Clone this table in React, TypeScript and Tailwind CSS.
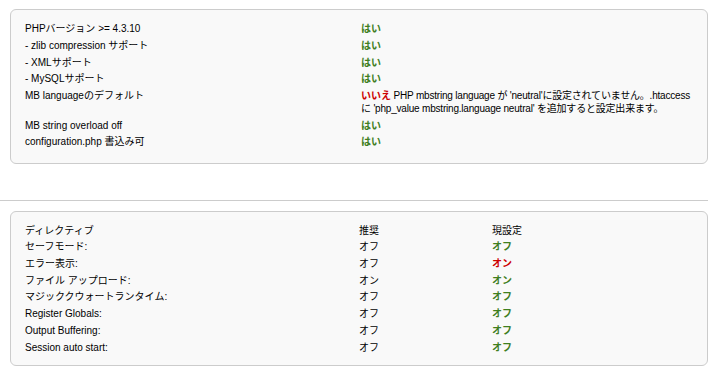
import React from 'react';

const font = { fontFamily: '"Liberation Sans", "Noto Sans CJK JP", sans-serif' };

const checks: { label: string; ok: boolean; note?: React.ReactNode }[] = [
  { label: 'PHPバージョン >= 4.3.10', ok: true },
  { label: '- zlib compression サポート', ok: true },
  { label: '- XMLサポート', ok: true },
  { label: '- MySQLサポート', ok: true },
  {
    label: 'MB languageのデフォルト',
    ok: false,
    note: <>
        PHP mbstring language が 'neutral'に設定されていません。.htaccess
        <br />
        に 'php_value mbstring.language neutral' を追加すると設定出来ます。
      </>
  },
  { label: 'MB string overload off', ok: true },
  { label: 'configuration.php 書込み可', ok: true }
];

const settings: { label: string; rec: string; cur: string; good: boolean }[] = [
  { label: 'セーフモード:', rec: 'オフ', cur: 'オフ', good: true },
  { label: 'エラー表示:', rec: 'オフ', cur: 'オン', good: false },
  { label: 'ファイル アップロード:', rec: 'オン', cur: 'オン', good: true },
  { label: 'マジッククウォートランタイム:', rec: 'オフ', cur: 'オフ', good: true },
  { label: 'Register Globals:', rec: 'オフ', cur: 'オフ', good: true },
  { label: 'Output Buffering:', rec: 'オフ', cur: 'オフ', good: true },
  { label: 'Session auto start:', rec: 'オフ', cur: 'オフ', good: true }
];

export default function App() {
  return <div className="w-[716px] h-[369px] bg-white text-[10px] leading-[13px] text-black overflow-hidden" style={font}>
      <div className="pt-[9px] pl-[10px] w-[708px]">
        <div className="rounded-[6px] border border-[#cccccc] bg-[#f9f9f9] pl-[14px] pt-[10.4px] pb-[13.2px]">
          {checks.map(c => <div key={c.label} className="flex">
              <div className="w-[336px] py-[1.85px]">{c.label}</div>
              <div className="py-[1.85px] whitespace-nowrap tracking-[-0.2px]">
                {c.ok ? <span className="font-bold text-[#3f7f1f] tracking-normal">はい</span> : <>
                    <span className="font-bold text-[#cc0000] tracking-normal">いいえ</span>{' '}
                    {c.note}
                  </>}
              </div>
            </div>)}
        </div>
      </div>
      <div className="mt-[36px] h-px w-[708px] bg-[#cccccc]" />
      <div className="pt-[10px] pl-[10px] w-[708px]">
        <div className="rounded-[6px] border border-[#cccccc] bg-[#f9f9f9] pl-[14px] pt-[9.5px] pb-[9.2px]">
          <div className="flex">
            <div className="w-[334px] py-[1.85px]">ディレクティブ</div>
            <div className="w-[133px] py-[1.85px]">推奨</div>
            <div className="py-[1.85px]">現設定</div>
          </div>
          {settings.map(s => <div key={s.label} className="flex">
              <div className="w-[334px] py-[1.85px]">{s.label}</div>
              <div className="w-[133px] py-[1.85px]">{s.rec}</div>
              <div className={`py-[1.85px] font-bold ${s.good ? 'text-[#3f7f1f]' : 'text-[#cc0000]'}`}>
                {s.cur}
              </div>
            </div>)}
        </div>
      </div>
    </div>;
}
